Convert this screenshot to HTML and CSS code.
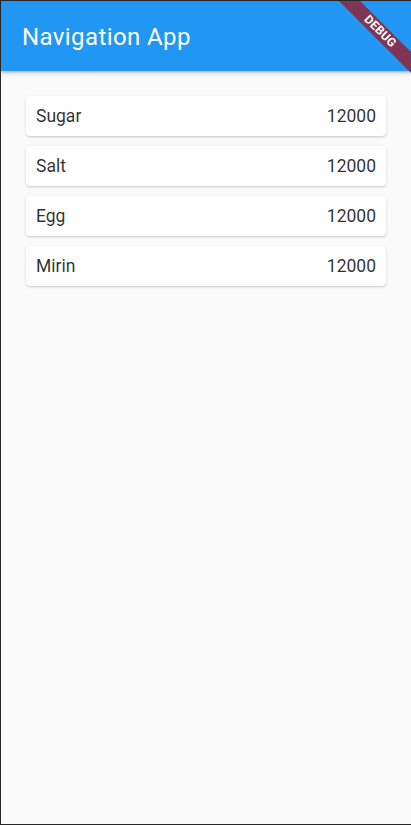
FILE: index.html
```html
<!DOCTYPE html>
<html>
<head>
<meta charset="utf-8">
<link rel="stylesheet" href="styles.css">
</head>
<body>
<div class="screen">
  <header class="appbar">
    <h1 class="title">Navigation App</h1>
  </header>
  <main class="list">
    <div class="card"><span>Sugar</span><span>12000</span></div>
    <div class="card"><span>Salt</span><span>12000</span></div>
    <div class="card"><span>Egg</span><span>12000</span></div>
    <div class="card"><span>Mirin</span><span>12000</span></div>
  </main>
  <div class="banner">DEBUG</div>
</div>
</body>
</html>
```
FILE: styles.css
```css
html, body {
  margin: 0;
  padding: 0;
}
body {
  width: 411px;
  height: 825px;
  overflow: hidden;
  background: #fafafa;
  font-family: Roboto, "Noto Sans", sans-serif;
}
.screen {
  position: relative;
  box-sizing: border-box;
  width: 411px;
  height: 825px;
  border-left: 1px solid #262626;
  border-top: 1px solid #262626;
  border-bottom: 1px solid #262626;
  background: #fafafa;
  overflow: hidden;
  display: flex;
  flex-direction: column;
}
.appbar {
  height: 70px;
  flex: none;
  box-sizing: border-box;
  background: #2196f3;
  display: flex;
  align-items: center;
  padding-left: 21px;
  padding-top: 2px;
  box-shadow: 0 2px 4px rgba(0,0,0,0.2), 0 1px 2px rgba(0,0,0,0.12);
  position: relative;
  z-index: 1;
}
.title {
  margin: 0;
  color: #fff;
  font-weight: 400;
  font-size: 24px;
  letter-spacing: 0.4px;
}
.list {
  display: flex;
  flex-direction: column;
  gap: 10px;
  padding: 25px 25px 0 25px;
}
.card {
  height: 40px;
  box-sizing: border-box;
  background: #fff;
  border-radius: 4px;
  box-shadow: 0 1px 3px rgba(0,0,0,0.16), 0 1px 1px rgba(0,0,0,0.06);
  display: flex;
  align-items: center;
  justify-content: space-between;
  padding: 0 10px;
  font-size: 17.5px;
  color: rgba(0,0,0,0.82);
}
.banner {
  position: absolute;
  z-index: 2;
  left: 319px;
  top: 23px;
  width: 120px;
  height: 15px;
  line-height: 15px;
  background: #7f3553;
  color: #fff;
  font-size: 12px;
  font-weight: 700;
  text-align: center;
  letter-spacing: 0.3px;
  transform: rotate(45deg);
}
```
